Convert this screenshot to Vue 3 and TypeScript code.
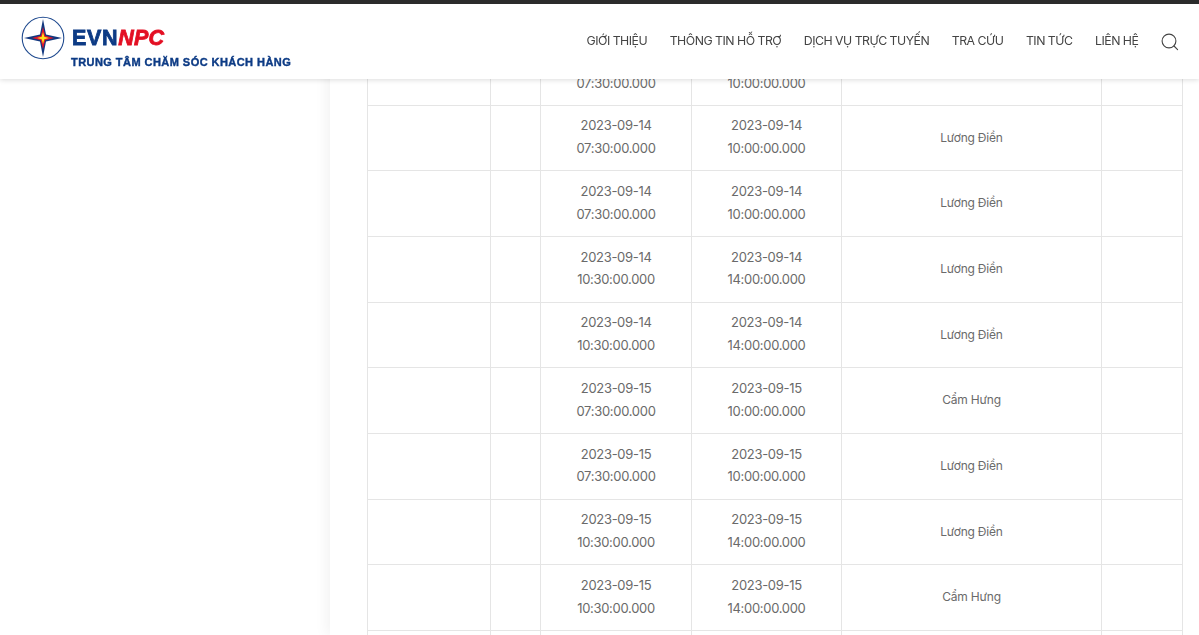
<script setup lang="ts">
interface Row { start: string; end: string; place: string }
const rows: Row[] = [
  { start: '07:30:00.000', end: '10:00:00.000', place: '' },
  { start: '07:30:00.000', end: '10:00:00.000', place: 'Lương Điền' },
  { start: '07:30:00.000', end: '10:00:00.000', place: 'Lương Điền' },
  { start: '10:30:00.000', end: '14:00:00.000', place: 'Lương Điền' },
  { start: '10:30:00.000', end: '14:00:00.000', place: 'Lương Điền' },
  { start: '07:30:00.000', end: '10:00:00.000', place: 'Cẩm Hưng' },
  { start: '07:30:00.000', end: '10:00:00.000', place: 'Lương Điền' },
  { start: '10:30:00.000', end: '14:00:00.000', place: 'Lương Điền' },
  { start: '10:30:00.000', end: '14:00:00.000', place: 'Cẩm Hưng' },
]
const dates = ['2023-09-14','2023-09-14','2023-09-14','2023-09-14','2023-09-14','2023-09-15','2023-09-15','2023-09-15','2023-09-15']
const nav = ['GIỚI THIỆU', 'THÔNG TIN HỖ TRỢ', 'DỊCH VỤ TRỰC TUYẾN', 'TRA CỨU', 'TIN TỨC', 'LIÊN HỆ']
</script>

<template>
  <div class="page">
    <header class="header">
      <div class="brand">
        <svg class="mark" width="44" height="44" viewBox="0 0 44 44">
          <circle cx="22" cy="22" r="20.8" fill="#fff" stroke="#1f4a8f" stroke-width="1.1" />
          <path d="M22 3 L25 18.6 L41 22 L25 25.4 L22 41 L19 25.4 L3 22 L19 18.6 Z" fill="#12387f" />
          <path d="M22 11 L24.2 19.8 L33 22 L24.2 24.2 L22 33 L19.8 24.2 L11 22 L19.8 19.8 Z" fill="#e0162b" />
          <path d="M22 16 L23.3 20.7 L28 22 L23.3 23.3 L22 28 L20.7 23.3 L16 22 L20.7 20.7 Z" fill="#ffe01a" />
        </svg>
        <div class="brand-text">
          <div class="brand-name"><span class="evn">EVN</span><span class="npc">NPC</span></div>
          <div class="brand-sub">TRUNG TÂM CHĂM SÓC KHÁCH HÀNG</div>
        </div>
      </div>
      <nav class="nav">
        <a v-for="item in nav" :key="item" class="nav-item">{{ item }}</a>
        <svg class="search" width="18" height="18" viewBox="0 0 18 18" fill="none" stroke="#444" stroke-width="1.1">
          <circle cx="8" cy="8" r="6.9" />
          <path d="M13 13 L16.6 16.6" stroke-linecap="round" />
        </svg>
      </nav>
    </header>
    <div class="layout">
      <aside class="side"></aside>
      <main class="main">
        <table class="table">
          <colgroup>
            <col class="c1" /><col class="c2" /><col class="c3" /><col class="c4" /><col class="c5" /><col class="c6" />
          </colgroup>
          <tbody>
            <tr v-for="(r, i) in rows" :key="i">
              <td></td>
              <td></td>
              <td class="when">{{ dates[i] }}<br />{{ r.start }}</td>
              <td class="when">{{ dates[i] }}<br />{{ r.end }}</td>
              <td class="place">{{ r.place }}</td>
              <td></td>
            </tr>
            <tr class="tail"><td></td><td></td><td></td><td></td><td></td><td></td></tr>
          </tbody>
        </table>
      </main>
    </div>
  </div>
</template>

<style>
html, body { margin: 0; height: 100%; overflow: hidden; background: #fff; }
</style>

<style scoped>
.page {
  height: 635px;
  overflow: hidden;
  font-family: Inter, "Noto Sans", sans-serif;
  color: #555;
  background: #fff;
}
.header {
  position: fixed;
  top: 0;
  left: 0;
  right: 0;
  z-index: 5;
  height: 75px;
  box-sizing: content-box;
  border-top: 4px solid #2b2b2b;
  background: #fff;
  box-shadow: 0 1px 5px rgba(0, 0, 0, 0.14);
  display: flex;
  justify-content: space-between;
  align-items: flex-start;
  padding-left: 21px;
  padding-right: 20px;
}
.brand {
  display: flex;
  align-items: flex-start;
  margin-top: 12px;
}
.mark { display: block; flex: none; }
.brand-text {
  margin-left: 7px;
  margin-top: 9px;
  font-family: "Liberation Sans", Arial, sans-serif;
  font-weight: 700;
}
.brand-name {
  font-size: 21.5px;
  line-height: 26px;
  letter-spacing: 0.7px;
  -webkit-text-stroke: 0.8px currentColor;
  color: #0d3b85;
}
.evn { color: #0d3b85; }
.npc { color: #e30f23; font-style: italic; letter-spacing: 0.2px; }
.brand-sub {
  margin-top: 4px;
  margin-left: -1px;
  font-size: 11px;
  line-height: 14px;
  letter-spacing: 0.45px;
  color: #0d3b85;
  white-space: nowrap;
  -webkit-text-stroke: 0.4px currentColor;
}
.nav {
  display: flex;
  align-items: center;
  height: 73px;
}
.nav-item {
  font-size: 12.3px;
  letter-spacing: -0.5px;
  color: #444;
  margin-right: 22.6px;
  white-space: nowrap;
}
.search { display: block; margin-top: 2px; }
.layout {
  display: flex;
  height: 635px;
}
.side {
  width: 330px;
  flex: none;
  background: #fff;
}
.main {
  flex: 1;
  box-shadow: -4px 0 12px rgba(0, 0, 0, 0.05);
  background: #fff;
  padding-left: 37px;
  padding-right: 16px;
}
.table {
  border-collapse: collapse;
  table-layout: fixed;
  width: 816px;
  margin-top: 39.2px;
  font-size: 13px;
  line-height: 22.7px;
  color: #6a6a6a;
  text-align: center;
}
.table td {
  border: 1px solid #e5e5e5;
  padding: 0 0 2px;
  height: 65.65px;
  box-sizing: border-box;
}
.when { letter-spacing: -0.3px; }
.table td.place { font-size: 12px; letter-spacing: -0.2px; padding: 0; }
.c1 { width: 123px; }
.c2 { width: 50px; }
.c3 { width: 151px; }
.c4 { width: 150px; }
.c5 { width: 260px; }
.c6 { width: 81px; }
</style>
